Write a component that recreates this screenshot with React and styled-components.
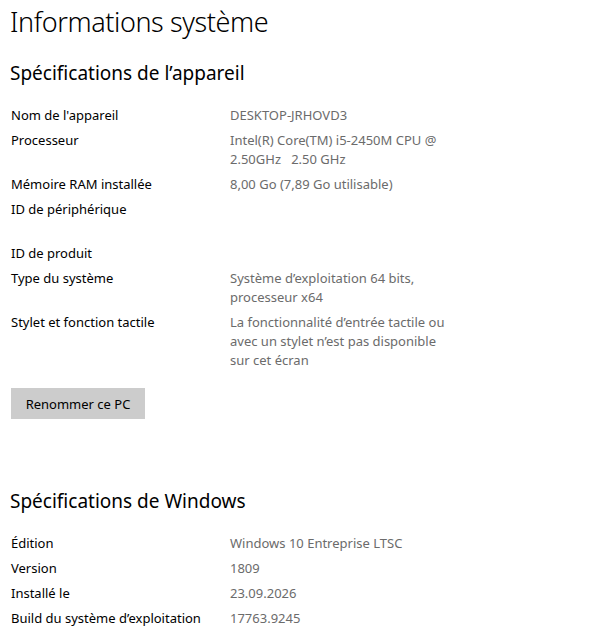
import styled, { createGlobalStyle } from 'styled-components';

const GlobalStyle = createGlobalStyle`
  html, body {
    margin: 0;
    padding: 0;
    background: #ffffff;
  }
  body {
    font-family: "Noto Sans", "Open Sans", sans-serif;
    color: #000000;
  }
`;

const device = [
  { label: "Nom de l'appareil", value: ['DESKTOP-JRHOVD3'] },
  { label: 'Processeur', value: ['Intel(R) Core(TM) i5-2450M CPU @', '2.50GHz   2.50 GHz'] },
  { label: 'Mémoire RAM installée', value: ['8,00 Go (7,89 Go utilisable)'] },
  { label: 'ID de périphérique', value: [], lines: 2 },
  { label: 'ID de produit', value: [] },
  { label: 'Type du système', value: ['Système d’exploitation 64 bits,', 'processeur x64'] },
  {
    label: 'Stylet et fonction tactile',
    value: ['La fonctionnalité d’entrée tactile ou', 'avec un stylet n’est pas disponible', 'sur cet écran'],
  },
];

const windows = [
  { label: 'Édition', value: ['Windows 10 Entreprise LTSC'] },
  { label: 'Version', value: ['1809'] },
  { label: 'Installé le', value: ['23.09.2026'] },
  { label: 'Build du système d’exploitation', value: ['17763.9245'] },
];

const SpecList = ({ items }) => (
  <List>
    {items.map((item) => (
      <Row key={item.label}>
        <Label>{item.label}</Label>
        <Value $lines={item.lines || 1}>
          {item.value.map((line) => (
            <div key={line}>{line}</div>
          ))}
        </Value>
      </Row>
    ))}
  </List>
);

export default function App() {
  return (
    <>
      <GlobalStyle />
      <Page>
        <Title>Informations système</Title>
        <Section>
          <H2>Spécifications de l’appareil</H2>
          <SpecList items={device} />
          <Button>Renommer ce PC</Button>
        </Section>
        <Section $windows>
          <H2>Spécifications de Windows</H2>
          <SpecList items={windows} />
        </Section>
      </Page>
    </>
  );
}

const Page = styled.div`
  padding: 0 10px;
  width: 593px;
`;

const Title = styled.h1`
  margin: 0;
  padding-top: 2px;
  font-size: 27px;
  font-weight: 300;
  line-height: 40px;
  letter-spacing: -0.4px;
`;

const Section = styled.section`
  margin-top: ${(p) => (p.$windows ? '69px' : '18px')};
`;

const H2 = styled.h2`
  margin: 0 0 20px;
  font-size: 19px;
  font-weight: 400;
  line-height: 26px;
`;

const List = styled.div`
  display: flex;
  flex-direction: column;
  gap: 6px;
  padding-left: 1px;
`;

const Row = styled.div`
  display: grid;
  grid-template-columns: 219px 230px;
  font-size: 13px;
  line-height: 19px;
`;

const Label = styled.div`
  color: #000000;
`;

const Value = styled.div`
  color: #6b6b6b;
  white-space: pre;
  min-height: ${(p) => p.$lines * 19}px;
`;

const Button = styled.button`
  margin: 18px 0 0 1px;
  width: 134px;
  height: 31px;
  border: none;
  background: #cccccc;
  color: #000000;
  font-family: inherit;
  font-size: 13px;
  padding: 0;
`;
